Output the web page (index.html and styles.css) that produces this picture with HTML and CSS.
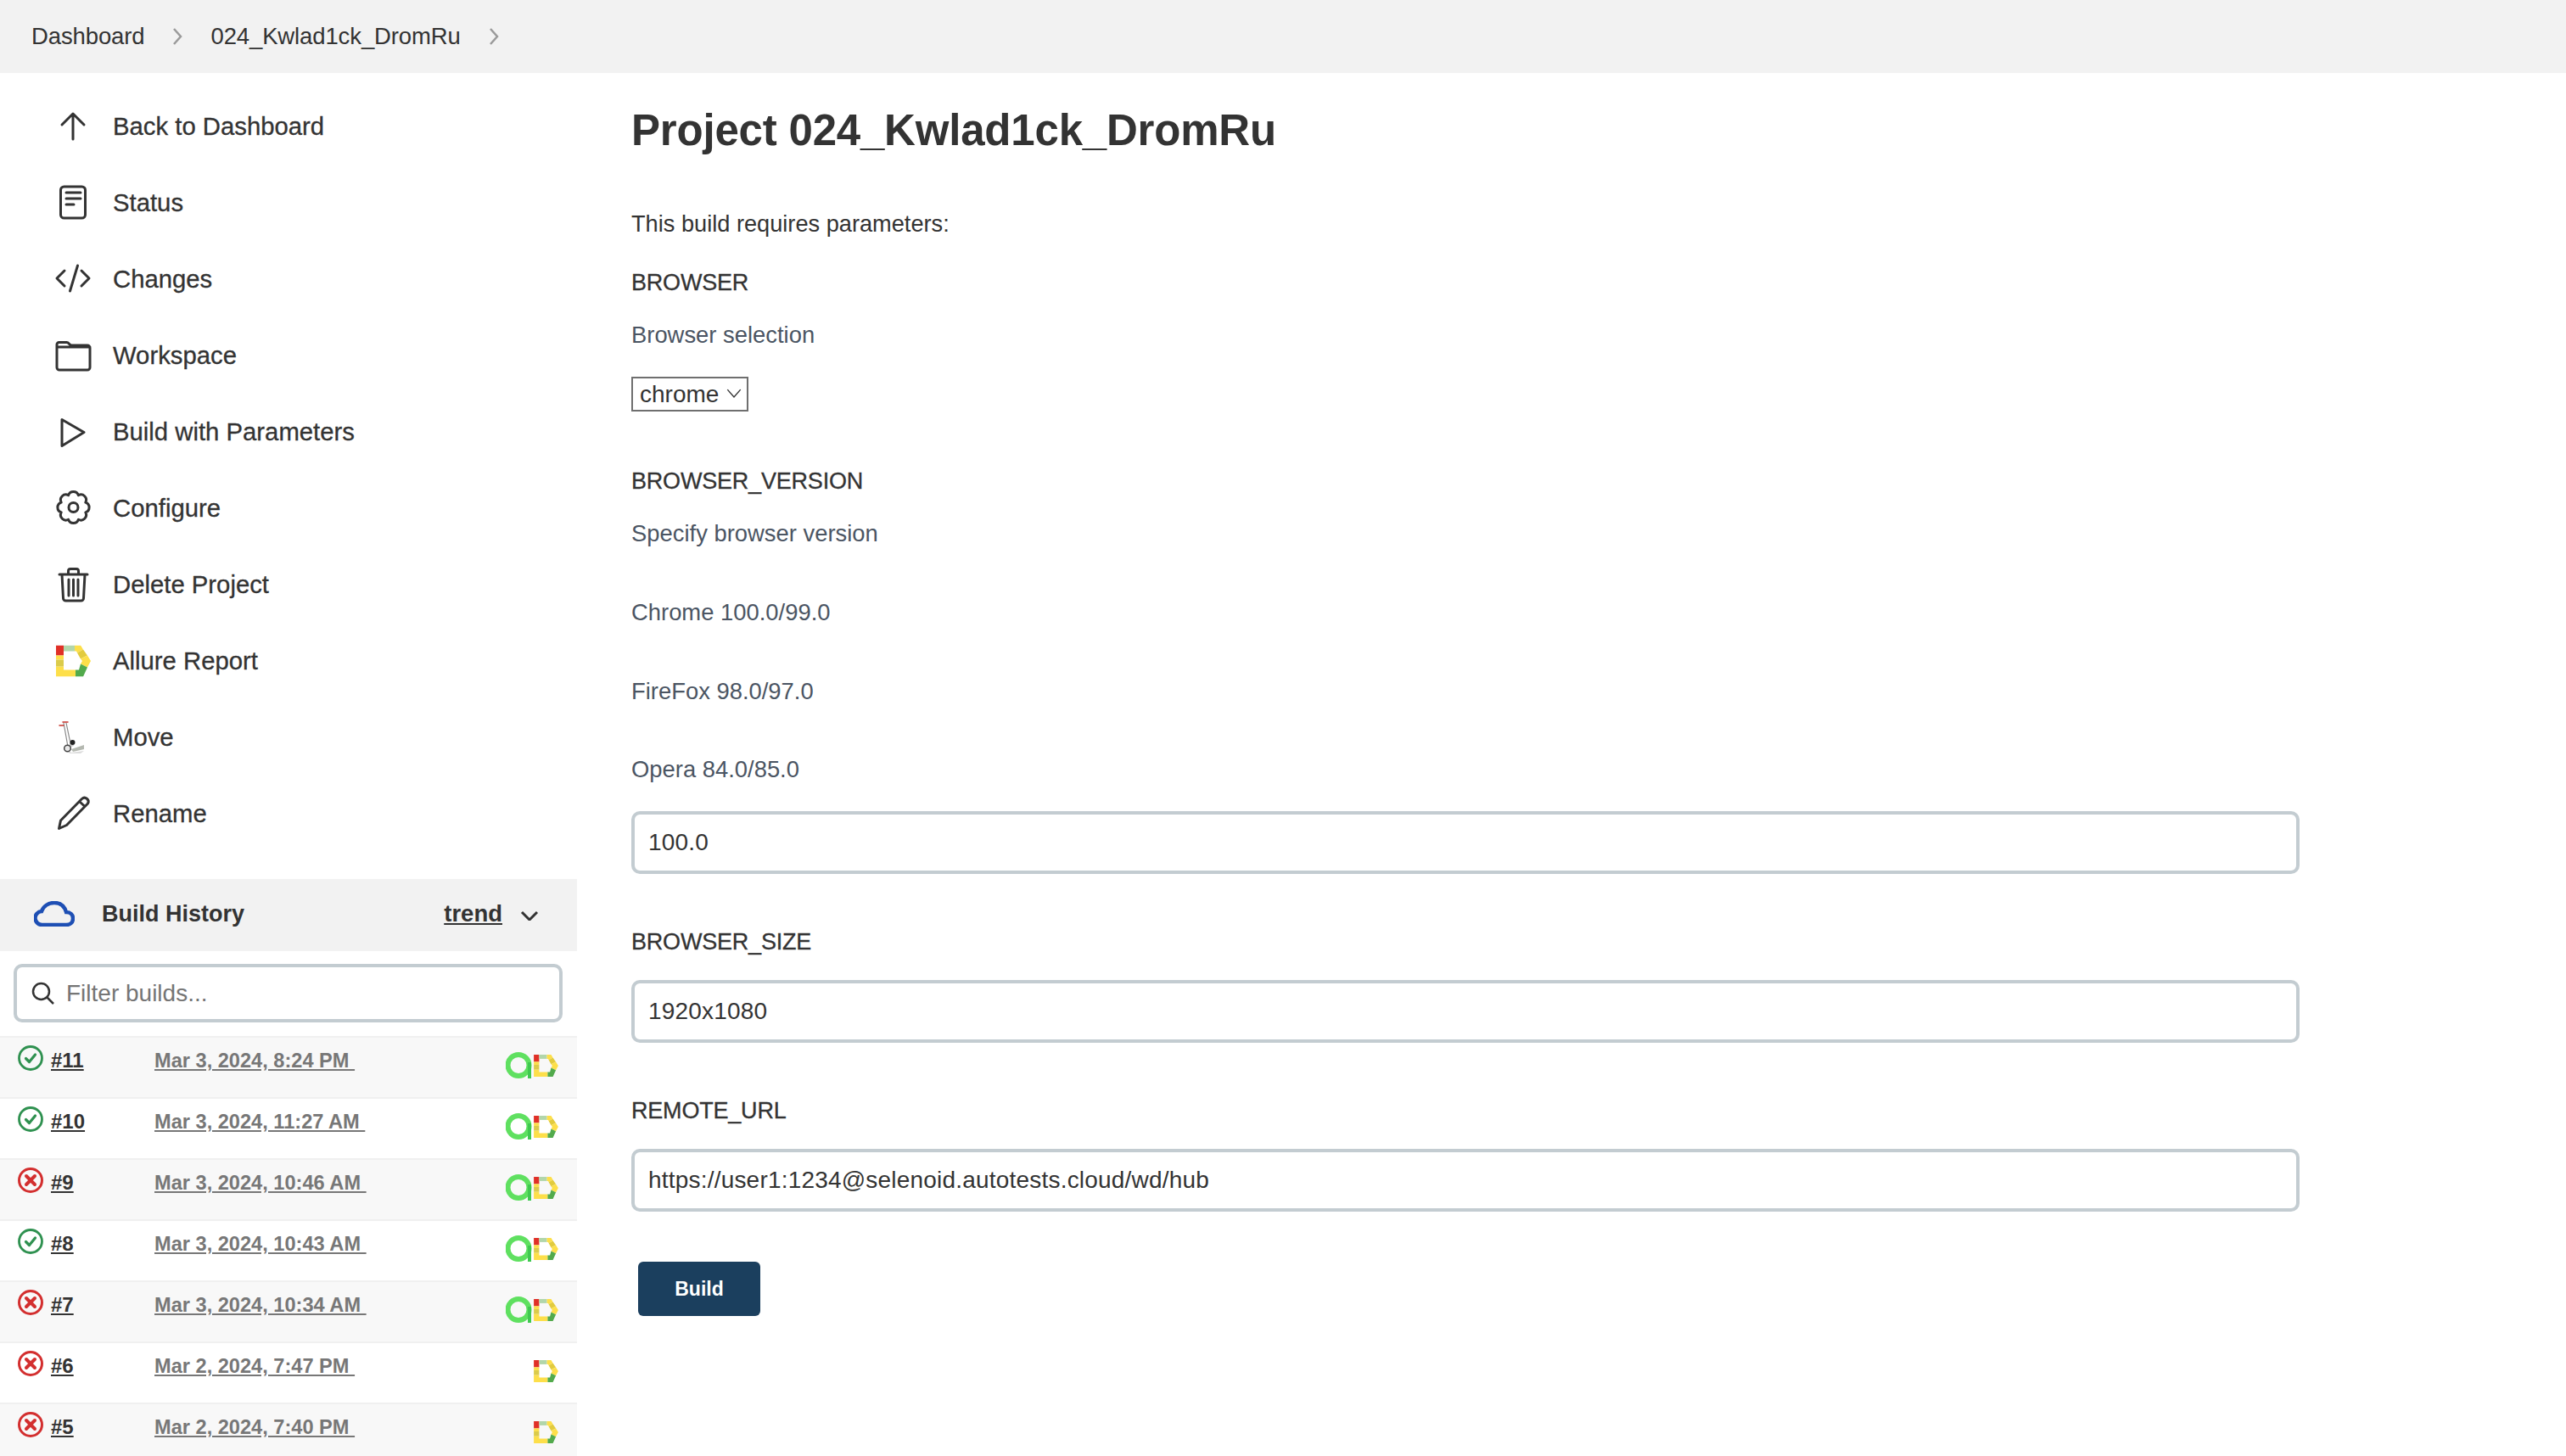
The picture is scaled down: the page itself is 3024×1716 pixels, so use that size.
FILE: index.html
```html
<!DOCTYPE html>
<html lang="en">
<head>
<meta charset="UTF-8">
<meta name="viewport" content="width=device-width, initial-scale=1.0">
<title>024_Kwlad1ck_DromRu</title>
<link rel="stylesheet" href="styles.css">
</head>
<body>
<svg class="defs" width="0" height="0">
    <symbol id="allure" viewBox="0 0 41 37">
        <g stroke="none">
            <polygon fill="#e03027" points="0,0 9,0 9,12 0,12"/>
            <polygon fill="#b2d6aa" points="9,0 22,0 22,7 9,7"/>
            <polygon fill="#fddf4a" points="22,0 29,0 32,5 25,9 24,7 22,7"/>
            <polygon fill="#e2cb3e" points="32,5 37,12 29,16 25,9"/>
            <polygon fill="#fddf4a" points="37,12 41,18.5 37,26 29,22 31,18.5 29,16"/>
            <polygon fill="#52aa4c" points="37,26 32,37 23,37 23,29 27,29 29,22"/>
            <polygon fill="#fddf4a" points="0,25 9,25 9,29 23,29 23,37 0,37"/>
            <polygon fill="#fddf4a" points="0,12 9,12 9,17 0,17"/>
            <polygon fill="#dbcb4a" points="0,17 9,17 9,25 0,25"/>
        </g>
    </symbol>
    <symbol id="ok" viewBox="0 0 30 30">
        <circle cx="15" cy="15" r="13.5" fill="none" stroke="#2f9150" stroke-width="2.8"/>
        <path d="M9.5 15.5l4 4 7-8.5" fill="none" stroke="#2f9150" stroke-width="3.2" stroke-linecap="round" stroke-linejoin="round"/>
    </symbol>
    <symbol id="fail" viewBox="0 0 30 30">
        <circle cx="15" cy="15" r="13.5" fill="none" stroke="#d32f2f" stroke-width="3"/>
        <path d="M10 10l10 10M20 10L10 20" fill="none" stroke="#d32f2f" stroke-width="4" stroke-linecap="round"/>
    </symbol>
    <symbol id="a" viewBox="0 0 32 32">
        <circle cx="15" cy="15.500" r="12.500" fill="none" stroke="#5fe060" stroke-width="6"/>
        <path d="M28 12v19" fill="none" stroke="#3fc850" stroke-width="4"/>
    </symbol>
</svg>

<nav class="crumbs">
    <a class="crumb" href="#">Dashboard</a>
    <svg class="crumb-sep" viewBox="0 0 12 22"><path d="M2 2l8 9-8 9"/></svg>
    <a class="crumb" href="#">024_Kwlad1ck_DromRu</a>
    <svg class="crumb-sep" viewBox="0 0 12 22"><path d="M2 2l8 9-8 9"/></svg>
</nav>

<div class="page">
    <aside class="side">
        <ul class="tasks">
            <li class="task"><svg class="task-icon" viewBox="0 0 48 48"><path d="M24 9v30M11 22L24 9l13 13"/></svg>Back to Dashboard</li>
            <li class="task"><svg class="task-icon" viewBox="0 0 48 48"><rect x="9.500" y="5" width="29" height="37" rx="4"/><path d="M16 12h17M16 19h17M16 26h9"/></svg>Status</li>
            <li class="task"><svg class="task-icon" viewBox="0 0 48 48"><path d="M14 14l-9 9 9 9M34 14l9 9-9 9M29.500 8l-9 30"/></svg>Changes</li>
            <li class="task"><svg class="task-icon" viewBox="0 0 48 48"><path d="M5 14v-3a2.500 2.500 0 0 1 2.500-2.500h9c3 0 3 3.500 6 3.500H41a3 3 0 0 1 3 3v23a3 3 0 0 1-3 3H8a3 3 0 0 1-3-3V14h39"/></svg>Workspace</li>
            <li class="task"><svg class="task-icon" viewBox="0 0 48 48"><path d="M11 9.500v31L37 24.500z"/></svg>Build with Parameters</li>
            <li class="task"><svg class="task-icon" viewBox="0 0 48 48"><path d="M18.600 8.700A6.200 6.200 0 0 1 30.400 8.700A6.200 6.200 0 0 1 38.800 17.100A6.200 6.200 0 0 1 38.800 28.900A6.200 6.200 0 0 1 30.400 37.300A6.200 6.200 0 0 1 18.600 37.300A6.200 6.200 0 0 1 10.200 28.900A6.200 6.200 0 0 1 10.200 17.100A6.200 6.200 0 0 1 18.600 8.700z"/><circle cx="24.500" cy="23" r="5.500"/></svg>Configure</li>
            <li class="task"><svg class="task-icon" viewBox="0 0 48 48"><path d="M8 12h33M18.500 12V8a2.500 2.500 0 0 1 2.500-2.500h7A2.500 2.500 0 0 1 30.500 8v4M11 12l1.500 28a3 3 0 0 0 3 3h18a3 3 0 0 0 3-3L38 12M19 18v19M24.500 18v19M30 18v19"/></svg>Delete Project</li>
            <li class="task"><svg class="task-icon" viewBox="0 0 48 48"><use href="#allure" x="4" y="5.500" width="41" height="37"/></svg>Allure Report</li>
            <li class="task"><svg class="task-icon move-icon" viewBox="0 0 48 48">
                <path d="M37 33l-15 5 2 3 13-3z" fill="#b4b8b0" stroke="none"/>
                <path d="M16 38l6 4 15-2-4 3H20z" fill="#dcdcdc" stroke="none"/>
                <path d="M13 7l5 28M16 7l5 24" stroke="#888" stroke-width="1.200"/>
                <path d="M21 26l-2 10 6-2z" fill="#c8c8c8" stroke="none"/>
                <circle cx="23.500" cy="30" r="3" fill="#222" stroke="none"/>
                <circle cx="17.500" cy="37" r="3.800" fill="#e8e8e8" stroke="#444" stroke-width="1.500"/>
                <path d="M12 6h6M8 10h5" stroke="#c8342c" stroke-width="1.500"/>
            </svg>Move</li>
            <li class="task"><svg class="task-icon" viewBox="0 0 48 48"><path d="M7.500 41.500l2-9.500L34.500 6.500a4.500 4.500 0 0 1 7 5.500L16.500 37.500zM31.500 9.500l6.500 6"/></svg>Rename</li>
        </ul>

        <section class="history">
            <header class="history-head">
                <svg class="cloud" viewBox="0 0 48 30"><path d="M10 28a8 8 0 0 1-1-16C11 6 17 2 24 2c7 0 12 4 14 11 5 0 8 3 8 7.500S43 28 38 28z"/></svg>
                <span class="history-title">Build History</span>
                <a class="trend" href="#">trend</a>
                <svg class="trend-arrow" viewBox="0 0 22 12"><path d="M2 2l9 9 9-9"/></svg>
            </header>
            <div class="filter">
                <svg class="filter-icon" viewBox="0 0 28 28"><circle cx="11.500" cy="11.500" r="9.500"/><path d="M18.500 18.500L26 26"/></svg>
                <input class="filter-input" type="text" placeholder="Filter builds...">
            </div>
            <div class="builds">
                <div class="build"><svg class="status"><use href="#ok"/></svg><a class="build-no" href="#">#11</a><a class="build-date" href="#">Mar 3, 2024, 8:24 PM&nbsp;</a><svg class="badge-a"><use href="#a"/></svg><svg class="badge-d"><use href="#allure"/></svg></div>
                <div class="build"><svg class="status"><use href="#ok"/></svg><a class="build-no" href="#">#10</a><a class="build-date" href="#">Mar 3, 2024, 11:27 AM&nbsp;</a><svg class="badge-a"><use href="#a"/></svg><svg class="badge-d"><use href="#allure"/></svg></div>
                <div class="build"><svg class="status"><use href="#fail"/></svg><a class="build-no" href="#">#9</a><a class="build-date" href="#">Mar 3, 2024, 10:46 AM&nbsp;</a><svg class="badge-a"><use href="#a"/></svg><svg class="badge-d"><use href="#allure"/></svg></div>
                <div class="build"><svg class="status"><use href="#ok"/></svg><a class="build-no" href="#">#8</a><a class="build-date" href="#">Mar 3, 2024, 10:43 AM&nbsp;</a><svg class="badge-a"><use href="#a"/></svg><svg class="badge-d"><use href="#allure"/></svg></div>
                <div class="build"><svg class="status"><use href="#fail"/></svg><a class="build-no" href="#">#7</a><a class="build-date" href="#">Mar 3, 2024, 10:34 AM&nbsp;</a><svg class="badge-a"><use href="#a"/></svg><svg class="badge-d"><use href="#allure"/></svg></div>
                <div class="build"><svg class="status"><use href="#fail"/></svg><a class="build-no" href="#">#6</a><a class="build-date" href="#">Mar 2, 2024, 7:47 PM&nbsp;</a><svg class="badge-d"><use href="#allure"/></svg></div>
                <div class="build"><svg class="status"><use href="#fail"/></svg><a class="build-no" href="#">#5</a><a class="build-date" href="#">Mar 2, 2024, 7:40 PM&nbsp;</a><svg class="badge-d"><use href="#allure"/></svg></div>
            </div>
        </section>
    </aside>

    <main class="main">
        <h1 class="title">Project 024_Kwlad1ck_DromRu</h1>
        <p class="intro">This build requires parameters:</p>

        <form>
            <div class="param first">
                <div class="param-name">BROWSER</div>
                <div class="param-desc">Browser selection</div>
                <div class="select-box">
                    <select class="select">
                        <option>chrome</option>
                    </select>
                    <svg class="select-arrow" viewBox="0 0 16 10"><path d="M1 1l7 8 7-8"/></svg>
                </div>
            </div>

            <div class="param">
                <div class="param-name">BROWSER_VERSION</div>
                <div class="param-desc">Specify browser version</div>
                <div class="param-desc spaced">Chrome 100.0/99.0</div>
                <div class="param-desc spaced">FireFox 98.0/97.0</div>
                <div class="param-desc spaced last">Opera 84.0/85.0</div>
                <input class="field after-desc" type="text" value="100.0">
            </div>

            <div class="param">
                <div class="param-name">BROWSER_SIZE</div>
                <input class="field" type="text" value="1920x1080">
            </div>

            <div class="param">
                <div class="param-name">REMOTE_URL</div>
                <input class="field" type="text" value="https://user1:1234@selenoid.autotests.cloud/wd/hub">
            </div>

            <button class="build-btn" type="button">Build</button>
        </form>
    </main>
</div>
</body>
</html>
```

FILE: styles.css
```css
* {
    box-sizing: border-box;
}

html,
body {
    height: 100%;
}

body {
    margin: 0;
    overflow: hidden;
    background-color: #fff;
    color: #333;
    font-family: "Liberation Sans", Arial, sans-serif;
    font-size: 28px;
}

a {
    color: inherit;
}

.defs {
    display: block;
    height: 0;
}

/* breadcrumb bar */
.crumbs {
    display: flex;
    align-items: center;
    height: 86px;
    padding-left: 37px;
    background-color: #f2f2f2;
}

.crumb {
    color: #333;
    font-size: 27.5px;
    letter-spacing: -0.12px;
    text-decoration: none;
}

.crumb-sep {
    width: 12px;
    height: 22px;
    margin: 0 33px 0 33px;
    fill: none;
    stroke: #9a9a9a;
    stroke-width: 2.5;
}

.page {
    display: flex;
}

/* left column */
.side {
    flex: 0 0 680px;
}

.tasks {
    list-style: none;
    margin: 0;
    padding: 18px 0 0;
}

.task {
    display: flex;
    align-items: center;
    gap: 23px;
    height: 90px;
    padding-left: 62px;
    font-size: 29.3px;
    -webkit-text-stroke: 0.3px #333;
}

.task-icon {
    flex: none;
    width: 48px;
    height: 48px;
    fill: none;
    stroke: #333;
    stroke-width: 3;
    stroke-linecap: round;
    stroke-linejoin: round;
}

.history {
    margin-top: 32px;
}

.history-head {
    display: flex;
    align-items: center;
    height: 85px;
    padding: 0 0 3px 40px;
    background-color: #f2f2f2;
}

.cloud {
    width: 48px;
    height: 30px;
    margin-right: 32px;
    fill: none;
    stroke: #1e4fb4;
    stroke-width: 4.500;
}

.history-title {
    flex: 1;
    font-size: 27px;
    font-weight: bold;
}

.trend {
    font-size: 27.5px;
    font-weight: bold;
}

.trend-arrow {
    width: 22px;
    height: 12px;
    margin: 4px 45px 0 21px;
    fill: none;
    stroke: #333;
    stroke-width: 3;
}

.filter {
    display: flex;
    align-items: center;
    height: 69px;
    margin: 15px 17px 16px 16px;
    padding-left: 17px;
    border: 4px solid #c3ccd1;
    border-radius: 10px;
}

.filter-icon {
    flex: none;
    width: 28px;
    height: 28px;
    fill: none;
    stroke: #333;
    stroke-width: 2.500;
}

.filter-input {
    flex: 1;
    min-width: 0;
    margin-left: 13px;
    padding: 0;
    border: none;
    outline: none;
    background: none;
    color: #333;
    font: inherit;
}

.filter-input::placeholder {
    color: #757575;
}

.build {
    display: flex;
    align-items: flex-start;
    height: 72px;
    border-top: 2px solid #f0f0f0;
}

.build:nth-child(odd) {
    background-color: #f8f8f8;
}

.status {
    flex: none;
    width: 30px;
    height: 30px;
    margin: 9px 9px 0 21px;
}

.build-no {
    flex: 0 0 122px;
    margin-top: 12px;
    font-size: 24px;
    font-weight: bold;
    line-height: 30px;
}

.build-date {
    flex: 1;
    margin-top: 12px;
    color: #777;
    font-size: 23.6px;
    font-weight: bold;
    line-height: 30px;
}

.badge-a {
    flex: none;
    width: 32px;
    height: 32px;
    margin-top: 17px;
    margin-right: 1px;
}

.badge-d {
    flex: none;
    width: 29px;
    height: 26px;
    margin-top: 20px;
    margin-right: 22px;
}

/* right column */
.main {
    flex: 1;
    padding: 38px 314px 0 64px;
}

.title {
    margin: 0;
    font-size: 51px;
    letter-spacing: -0.2px;
    line-height: 60px;
}

.intro {
    margin: 60px 0 0;
    font-size: 27.2px;
    line-height: 40px;
}

.param {
    margin-top: 60px;
}

.param.first {
    margin-top: 29px;
    padding-bottom: 2px;
}

.param-name {
    font-size: 27px;
    letter-spacing: -0.2px;
    line-height: 40px;
    -webkit-text-stroke: 0.3px #333;
}

.param-desc {
    margin-top: 22px;
    color: #4b5563;
    font-size: 27.4px;
    line-height: 40px;
}

.param-desc.spaced {
    margin-top: 53px;
}

.param-desc.last {
    margin-top: 52px;
}

.select-box {
    position: relative;
    width: 138px;
    height: 41px;
    margin-top: 29px;
}

.select {
    display: block;
    width: 100%;
    height: 100%;
    padding: 0 0 0 8px;
    border: 2px solid #6f6f6f;
    border-radius: 0;
    appearance: none;
    background: #fff;
    color: #333;
    font: inherit;
}

.select-arrow {
    position: absolute;
    top: 14px;
    right: 8px;
    width: 18px;
    height: 11px;
    fill: none;
    stroke: #333;
    stroke-width: 1.300;
}

.field {
    display: block;
    width: 100%;
    height: 74px;
    margin-top: 25px;
    padding: 0 16px;
    border: 4px solid #c3ccd1;
    border-radius: 10px;
    outline: none;
    background: #fff;
    color: #333;
    font: inherit;
    letter-spacing: 0.2px;
}

.field.after-desc {
    margin-top: 29px;
}

.build-btn {
    display: block;
    width: 144px;
    height: 64px;
    margin: 59px 0 0 8px;
    border: none;
    border-radius: 6px;
    background-color: #1b3f5e;
    color: #fff;
    font-family: inherit;
    font-size: 23px;
    font-weight: bold;
    cursor: pointer;
}
```
